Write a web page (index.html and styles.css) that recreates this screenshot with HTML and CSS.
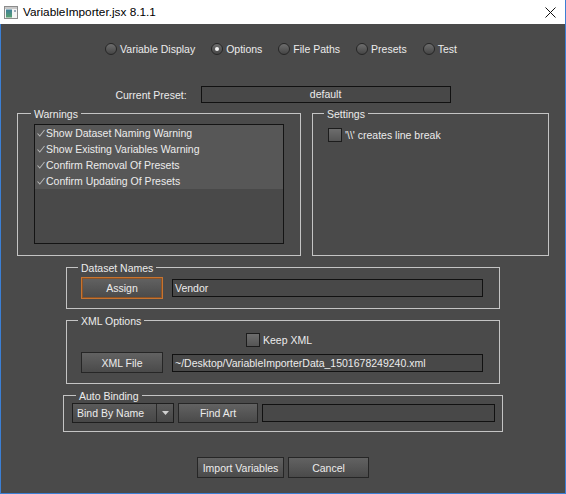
FILE: index.html
```html
<!DOCTYPE html>
<html>
<head>
<meta charset="utf-8">
<link rel="stylesheet" href="styles.css">
</head>
<body>
<div class="window">
  <div class="titlebar">
    <svg class="app-icon" width="14" height="13" viewBox="0 0 14 13">
      <defs>
        <linearGradient id="g1" x1="0" y1="0" x2="0" y2="1">
          <stop offset="0" stop-color="#3f7f9a"/>
          <stop offset="1" stop-color="#58a070"/>
        </linearGradient>
      </defs>
      <rect x="0.5" y="0.5" width="13" height="12" fill="#f4f4f4" stroke="#8c8c8c"/>
      <rect x="1" y="1" width="12" height="2" fill="#c9c9c9"/>
      <rect x="2" y="3.5" width="6" height="8" fill="url(#g1)"/>
      <rect x="10" y="4" width="2" height="2" fill="#9aa9b8"/>
    </svg>
    <span class="title">VariableImporter.jsx 8.1.1</span>
    <svg class="close" width="11" height="11" viewBox="0 0 11 11">
      <path d="M0.5 0.5 L10.5 10.5 M10.5 0.5 L0.5 10.5" stroke="#111" stroke-width="1" fill="none"/>
    </svg>
  </div>
  <div class="content">
    <div class="tabs">
      <div class="radio"><span class="radio-dot"></span><span>Variable Display</span></div>
      <div class="radio"><span class="radio-dot on"></span><span>Options</span></div>
      <div class="radio"><span class="radio-dot"></span><span>File Paths</span></div>
      <div class="radio"><span class="radio-dot"></span><span>Presets</span></div>
      <div class="radio"><span class="radio-dot"></span><span>Test</span></div>
    </div>

    <div class="preset-row">
      <span class="preset-label">Current Preset:</span>
      <div class="field field-preset">default</div>
    </div>

    <div class="panels-row">
      <div class="panel panel-warnings">
        <span class="panel-title t13">Warnings</span>
        <div class="listbox">
          <div class="item sel"><svg class="tick" width="8" height="8" viewBox="0 0 8 8"><path d="M0.5 4.5 L2.8 7 L7.5 1" stroke="#b5b5b5" stroke-width="1.1" fill="none"/></svg>Show Dataset Naming Warning</div>
          <div class="item sel"><svg class="tick" width="8" height="8" viewBox="0 0 8 8"><path d="M0.5 4.5 L2.8 7 L7.5 1" stroke="#b5b5b5" stroke-width="1.1" fill="none"/></svg>Show Existing Variables Warning</div>
          <div class="item sel"><svg class="tick" width="8" height="8" viewBox="0 0 8 8"><path d="M0.5 4.5 L2.8 7 L7.5 1" stroke="#b5b5b5" stroke-width="1.1" fill="none"/></svg>Confirm Removal Of Presets</div>
          <div class="item sel"><svg class="tick" width="8" height="8" viewBox="0 0 8 8"><path d="M0.5 4.5 L2.8 7 L7.5 1" stroke="#b5b5b5" stroke-width="1.1" fill="none"/></svg>Confirm Updating Of Presets</div>
        </div>
      </div>
      <div class="panel panel-settings">
        <span class="panel-title t11">Settings</span>
        <div class="check-row settings-check"><span class="checkbox"></span><span>'\\' creates line break</span></div>
      </div>
    </div>

    <div class="panel panel-dataset">
      <span class="panel-title t11">Dataset Names</span>
      <div class="ctrl-row dataset-row">
        <div class="button button-assign">Assign</div>
        <div class="field field-wide">Vendor</div>
      </div>
    </div>

    <div class="panel panel-xml">
      <span class="panel-title t11">XML Options</span>
      <div class="check-row keep-row"><span class="checkbox"></span><span>Keep XML</span></div>
      <div class="ctrl-row xml-row">
        <div class="button button-xml">XML File</div>
        <div class="field field-wide">~/Desktop/VariableImporterData_1501678249240.xml</div>
      </div>
    </div>

    <div class="panel panel-auto">
      <span class="panel-title t12">Auto Binding</span>
      <div class="ctrl-row auto-row">
        <div class="dropdown"><span class="dd-text">Bind By Name</span><span class="dd-arrow"><svg width="7" height="4" viewBox="0 0 7 4"><path d="M0 0 L7 0 L3.5 4 Z" fill="#d0d0d0"/></svg></span></div>
        <div class="button button-find">Find Art</div>
        <div class="field field-auto"></div>
      </div>
    </div>

    <div class="bottom-row">
      <div class="button button-import">Import Variables</div>
      <div class="button button-cancel">Cancel</div>
    </div>
  </div>
</div>
</body>
</html>
```

FILE: styles.css
```css
* { box-sizing: border-box; }

html, body {
  margin: 0;
  padding: 0;
  background: #4a4a4a;
}

.window {
  width: 566px;
  height: 494px;
  display: flex;
  flex-direction: column;
  font-family: "Liberation Sans", Arial, sans-serif;
  font-size: 10.5px;
  color: #ececec;
}

.titlebar {
  height: 24px;
  flex: none;
  background: #ffffff;
  display: flex;
  align-items: center;
  border-right: 1px solid #3b7fd4;
}

.app-icon {
  margin-left: 4px;
  flex: none;
}

.title {
  margin-left: 5px;
  font-family: "Liberation Sans", Arial, sans-serif;
  font-size: 11.8px;
  color: #000000;
  flex: 1;
}

.close {
  margin-right: 9px;
  flex: none;
}

.content {
  flex: 1;
  background: #4a4a4a;
  border: 1px solid #3b7fd4;
  border-top: none;
  display: flex;
  flex-direction: column;
  align-items: center;
}

/* tabs */
.tabs {
  margin-top: 17px;
  height: 16px;
  display: flex;
  align-items: center;
  gap: 16px;
  padding-right: 4px;
}

.radio {
  display: flex;
  align-items: center;
  gap: 3px;
  white-space: nowrap;
}

.radio-dot {
  width: 12px;
  height: 12px;
  border-radius: 50%;
  border: 1px solid #262626;
  background: linear-gradient(#6e6e6e, #454545);
  display: flex;
  align-items: center;
  justify-content: center;
}

.radio-dot.on::after {
  content: "";
  width: 4px;
  height: 4px;
  border-radius: 50%;
  background: #f2f2f2;
}

/* preset */
.preset-row {
  margin-top: 29px;
  height: 17px;
  display: flex;
  align-items: center;
  gap: 14px;
}

.field {
  border: 1px solid #111111;
  background: #484848;
  height: 18px;
  line-height: 16px;
  padding-left: 2px;
  white-space: nowrap;
  overflow: hidden;
}

.field-preset {
  width: 250px;
  height: 17px;
  line-height: 15px;
  text-align: center;
  padding-left: 0;
}

/* panels */
.panels-row {
  margin-top: 10px;
  display: flex;
  gap: 11px;
}

.panel {
  border: 1px solid #c4c4c4;
  display: flex;
  flex-direction: column;
  align-items: flex-start;
}

.panel-title {
  margin-top: -7px;
  padding: 0 3px;
  line-height: 14px;
  height: 14px;
  background: #4a4a4a;
  white-space: nowrap;
}

.t11 { margin-left: 11px; }
.t12 { margin-left: 12px; }
.t13 { margin-left: 13px; }

.panel-warnings { width: 284px; }
.panel-settings { width: 237px; }

.listbox {
  margin: 3px 0 11px 16px;
  width: 250px;
  height: 120px;
  border: 1px solid #141414;
  background: #494949;
}

.item {
  height: 16px;
  line-height: 16px;
  display: flex;
  align-items: center;
  white-space: nowrap;
}

.item.sel { background: #575757; }

.tick {
  margin-left: 2px;
  margin-right: 1px;
  flex: none;
}

.check-row {
  display: flex;
  align-items: center;
  gap: 3px;
  white-space: nowrap;
  height: 14px;
}

.checkbox {
  width: 14px;
  height: 14px;
  border: 1px solid #1c1c1c;
  background: linear-gradient(#6d6d6d, #555555);
  flex: none;
}

.settings-check {
  margin-top: 7px;
  margin-left: 15px;
}

/* dataset */
.panel-dataset { width: 434px; margin-top: 11px; }
.panel-xml { width: 434px; margin-top: 11px; }
.panel-auto { width: 440px; margin-top: 11px; }

.ctrl-row {
  display: flex;
  align-items: center;
}

.dataset-row {
  margin: 2px 0 9px 14px;
}

.button {
  height: 21px;
  border: 1px solid #262626;
  background: linear-gradient(#626262, #4a4a4a);
  display: flex;
  align-items: center;
  justify-content: center;
  white-space: nowrap;
  flex: none;
}

.button-assign {
  width: 82px;
  height: 22px;
  border: 1px solid #c77430;
  box-shadow: inset 0 0 0 1px #8a5226;
}

.field-wide {
  width: 311px;
  margin-left: 9px;
}

.keep-row {
  margin-top: 5px;
  align-self: center;
  margin-right: 8px;
}

.xml-row {
  margin: 5px 0 10px 14px;
}

.button-xml { width: 82px; }

.auto-row {
  margin: 0 0 8px 8px;
}

.dropdown {
  width: 102px;
  height: 20px;
  border: 1px solid #1e1e1e;
  background: linear-gradient(#5a5a5a, #474747);
  display: flex;
  align-items: center;
  flex: none;
}

.dd-text {
  flex: 1;
  padding-left: 4px;
  white-space: nowrap;
}

.dd-arrow {
  width: 17px;
  height: 18px;
  border-left: 1px solid #2a2a2a;
  display: flex;
  align-items: center;
  justify-content: center;
}

.button-find {
  width: 80px;
  height: 20px;
  margin-left: 4px;
}

.field-auto {
  width: 233px;
  margin-left: 4px;
}

.bottom-row {
  margin-top: 25px;
  display: flex;
  gap: 4px;
}

.button-import { width: 87px; }
.button-cancel { width: 81px; }
```
